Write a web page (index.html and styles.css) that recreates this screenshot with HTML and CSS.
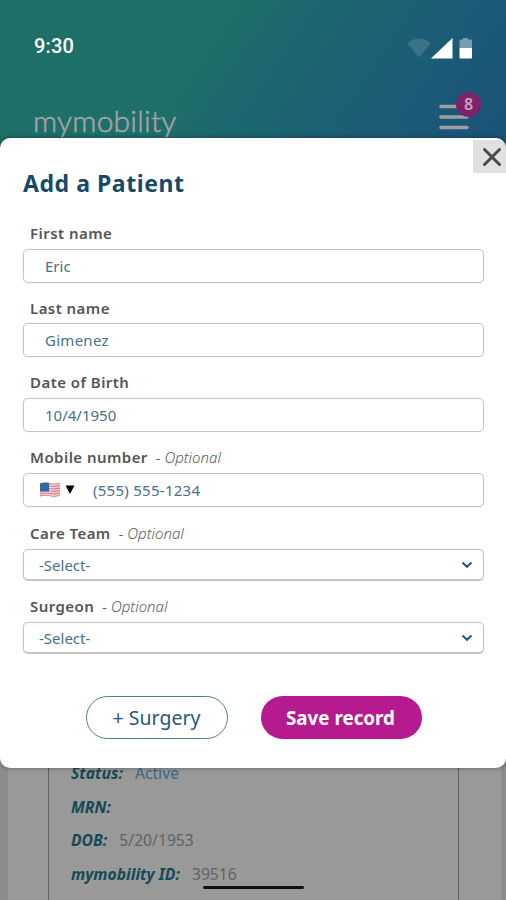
FILE: index.html
```html
<!DOCTYPE html>
<html lang="en">
<head>
<meta charset="utf-8">
<title>mymobility</title>
<link rel="stylesheet" href="styles.css">
</head>
<body>
<div class="phone">
  <header class="top">
    <div class="status">
      <span class="clock">9:30</span>
      <svg class="indicators" width="66" height="24" viewBox="0 0 66 24">
        <path d="M0.500 6Q12 -3 24 6L12 20.500Z" fill="#fff" fill-opacity=".14"/>
        <path d="M24 21.500L45.500 1V21.500Z" fill="#fff"/>
        <path d="M56 1h5v1.500h3a1 1 0 0 1 1 1V11H52.500V3.500a1 1 0 0 1 1-1h2.500z" fill="#fff" fill-opacity=".4"/>
        <path d="M52.500 11h12.500v9.500a1 1 0 0 1-1 1H53.500a1 1 0 0 1-1-1z" fill="#fff"/>
      </svg>
    </div>
    <div class="brand">
      <span class="logo">mymobility</span>
      <div class="menu">
        <svg width="30" height="27" viewBox="0 0 30 27" stroke="#9e9fa5" stroke-width="3.600" stroke-linecap="round"><path d="M2 2.500H28M2 13H28M2 23.500H28"/></svg>
        <span class="badge">8</span>
      </div>
    </div>
  </header>
  <main class="modal">
    <button class="close" aria-label="Close"><svg width="20" height="20" viewBox="0 0 20 20" stroke="#4a4a4a" stroke-width="3" stroke-linecap="round"><path d="M2.500 2.500L17.500 17.500M17.500 2.500L2.500 17.500"/></svg></button>
    <h1>Add a Patient</h1>
    <section class="group"><div class="label"><b>First name</b></div><div class="field"><span>Eric</span></div></section>
    <section class="group"><div class="label"><b>Last name</b></div><div class="field"><span class="wide">Gimenez</span></div></section>
    <section class="group dob"><div class="label"><b>Date of Birth</b></div><div class="field"><span>10/4/1950</span></div></section>
    <section class="group mobile"><div class="label"><b>Mobile number</b><i>- Optional</i></div>
      <div class="field phone-field">
        <svg class="flag" width="22" height="16" viewBox="0 0 22 16">
          <defs><clipPath id="wave"><path d="M1 1.500Q6 0 11 1T21 .8V14Q16 15.500 11 14.200T1 14.800Z"/></clipPath></defs>
          <g clip-path="url(#wave)"><path fill="#f0d3d7" d="M0 0h22v16H0z"/><path stroke="#d8828d" stroke-width="1.200" fill="none" d="M0 1.500q6-1 11 0t11-.5M0 4q6-1 11 0t11-.5M0 6.500q6-1 11 0t11-.5M0 9q6-1 11 0t11-.5M0 11.500q6-1 11 0t11-.5M0 14q6-1 11 0t11-.5"/><path fill="#2d659e" d="M0 0h10v9.500H0z"/><path stroke="#5788b8" stroke-width=".8" stroke-dasharray="1 1.500" d="M2 3h7M3 5h6M2 7h7"/></g>
        </svg>
        <svg class="tri" width="10" height="10" viewBox="0 0 10 10"><path d="M.5 .5h9L5 9z"/></svg>
        <span class="wide">(555) 555-1234</span>
      </div></section>
    <section class="group select"><div class="label"><b>Care Team</b><i>- Optional</i></div><div class="field"><span>-Select-</span><svg width="12" height="8" viewBox="0 0 12 8" fill="none" stroke="#20597c" stroke-width="2"><path d="M1.500 1.500L6 5.800L10.500 1.500"/></svg></div></section>
    <section class="group select"><div class="label"><b>Surgeon</b><i>- Optional</i></div><div class="field"><span>-Select-</span><svg width="12" height="8" viewBox="0 0 12 8" fill="none" stroke="#20597c" stroke-width="2"><path d="M1.500 1.500L6 5.800L10.500 1.500"/></svg></div></section>
    <div class="actions"><button class="surgery">+ Surgery</button><button class="save">Save record</button></div>
  </main>
  <section class="record">
    <div class="card">
      <p><b>Status:</b><span class="active">Active</span></p>
      <p><b>MRN:</b></p>
      <p><b>DOB:</b><span>5/20/1953</span></p>
      <p class="id"><b>mymobility ID:</b><span>39516</span></p>
    </div>
  </section>
  <div class="homebar"></div>
</div>
</body>
</html>
```

FILE: styles.css
```css
* { box-sizing: border-box; }
body { margin: 0; font-family: "Noto Sans", sans-serif; }
.phone {
  position: relative;
  width: 506px;
  height: 900px;
  overflow: hidden;
  display: flex;
  flex-direction: column;
  background: linear-gradient(#1b6e68 0 300px, #8c8c8c 300px);
}
.top {
  height: 148px;
  margin-bottom: -10px;
  flex: none;
  padding: 34px 26px 0 34px;
  background: linear-gradient(124deg, #1d6f67 0%, #1d6f69 40%, #1b6470 58%, #1b5a77 82%, #1b5278 100%);
}
.status { display: flex; justify-content: space-between; height: 24px; align-items: center; padding-right: 7px; }
.indicators { margin-top: 5px; }
.clock { font: 500 20px/24px Roboto, sans-serif; color: #fff; letter-spacing: .2px; }
.brand { display: flex; justify-content: space-between; margin-top: 34px; }
.logo { font: 300 30px/56px Lato, sans-serif; color: #a1a2a7; margin-left: -1px; letter-spacing: .2px; -webkit-text-stroke: .6px #a1a2a7; }
.menu { position: relative; width: 41px; padding-top: 12px; }
.menu svg { display: block; }
.badge {
  position: absolute;
  left: 17px;
  top: 0;
  width: 25px;
  height: 25px;
  border-radius: 50%;
  background: #7f2268;
  color: #c6a5be;
  font: 600 16px/25px "Noto Sans", sans-serif;
  text-align: center;
}
.modal {
  position: relative;
  flex: none;
  height: 630px;
  background: #fff;
  border-radius: 10px;
  padding: 28px 22px 0 23px;
  box-shadow: 0 0 5px rgba(0, 0, 0, .4);
  overflow: hidden;
  z-index: 1;
}
.close {
  position: absolute;
  right: 0;
  top: 2px;
  width: 33px;
  height: 33px;
  border: 0;
  padding: 0;
  background: #e0e0e0;
  border-radius: 0 8px 0 2px;
}
.close svg { display: block; margin: 0 0 0 9px; }
h1 { margin: 0 0 22px; font-size: 23px; line-height: 35px; font-weight: 700; color: #17496b; letter-spacing: .55px; }
.group { display: flex; flex-direction: column; height: 74.6px; }
.group.mobile { height: 75.6px; }
.group.dob { height: 75px; }
.label { height: 20px; margin-bottom: 5.500px; padding-left: 7px; display: flex; align-items: baseline; font-size: 15px; line-height: 20px; color: #555; }
.label b { font-weight: 600; letter-spacing: .45px; }
.label i { font-size: 15px; font-weight: 300; color: #5c5c5c; margin-left: 8px; }
.field {
  height: 34px;
  flex: none;
  border: 1.500px solid #c5c5c5;
  border-radius: 5px;
  display: flex;
  align-items: center;
  padding-left: 21px;
  font-size: 15px;
  line-height: 20px;
  color: #477089;
  box-shadow: 0 0 1px #ccc;
}
.wide { letter-spacing: .27px; }
.phone-field { padding-left: 15px; }
.flag { margin-top: 1px; }
.tri { margin: 1px 18px 0 4px; }
.select { height: 73.500px; }
.select .field { height: 32px; margin-top: .5px; padding: 1px 10px 0 15px; justify-content: space-between; border-bottom-width: 2px; }
.actions { display: flex; gap: 33px; padding-left: 63px; margin-top: 26px; }
.actions button { height: 43px; border-radius: 22px; font: 400 20px/24px "Noto Sans", sans-serif; padding: 0; }
.surgery { width: 142px; background: #fff; border: 1.500px solid #527b94; color: #275777; }
.actions .surgery { font-size: 19.500px; padding-top: 1px; padding-right: 1px; }
.actions .save { width: 161px; border: 0; background: #b51b8e; color: #fff; font-weight: 700; font-size: 18.800px; padding: 1px 2px 0 0; }
.record { flex: 1; margin: -20px 5px 0 8px; padding: 0 42px 0 40px; background: #999; }
.card { height: 100%; border: solid #626262; border-width: 0 1.500px; padding: 8px 21px 0 22px; }
.card p { margin: 0; height: 33.700px; font-size: 15.700px; line-height: 20px; color: #626262; display: flex; align-items: center; }
.card b { font-style: italic; font-weight: 700; color: #164956; margin-right: 12px; }
.card .active { color: #3c6785; }
.homebar { position: absolute; left: 203px; bottom: 11px; width: 101px; height: 3px; border-radius: 2px; background: #111; z-index: 2; }
```
